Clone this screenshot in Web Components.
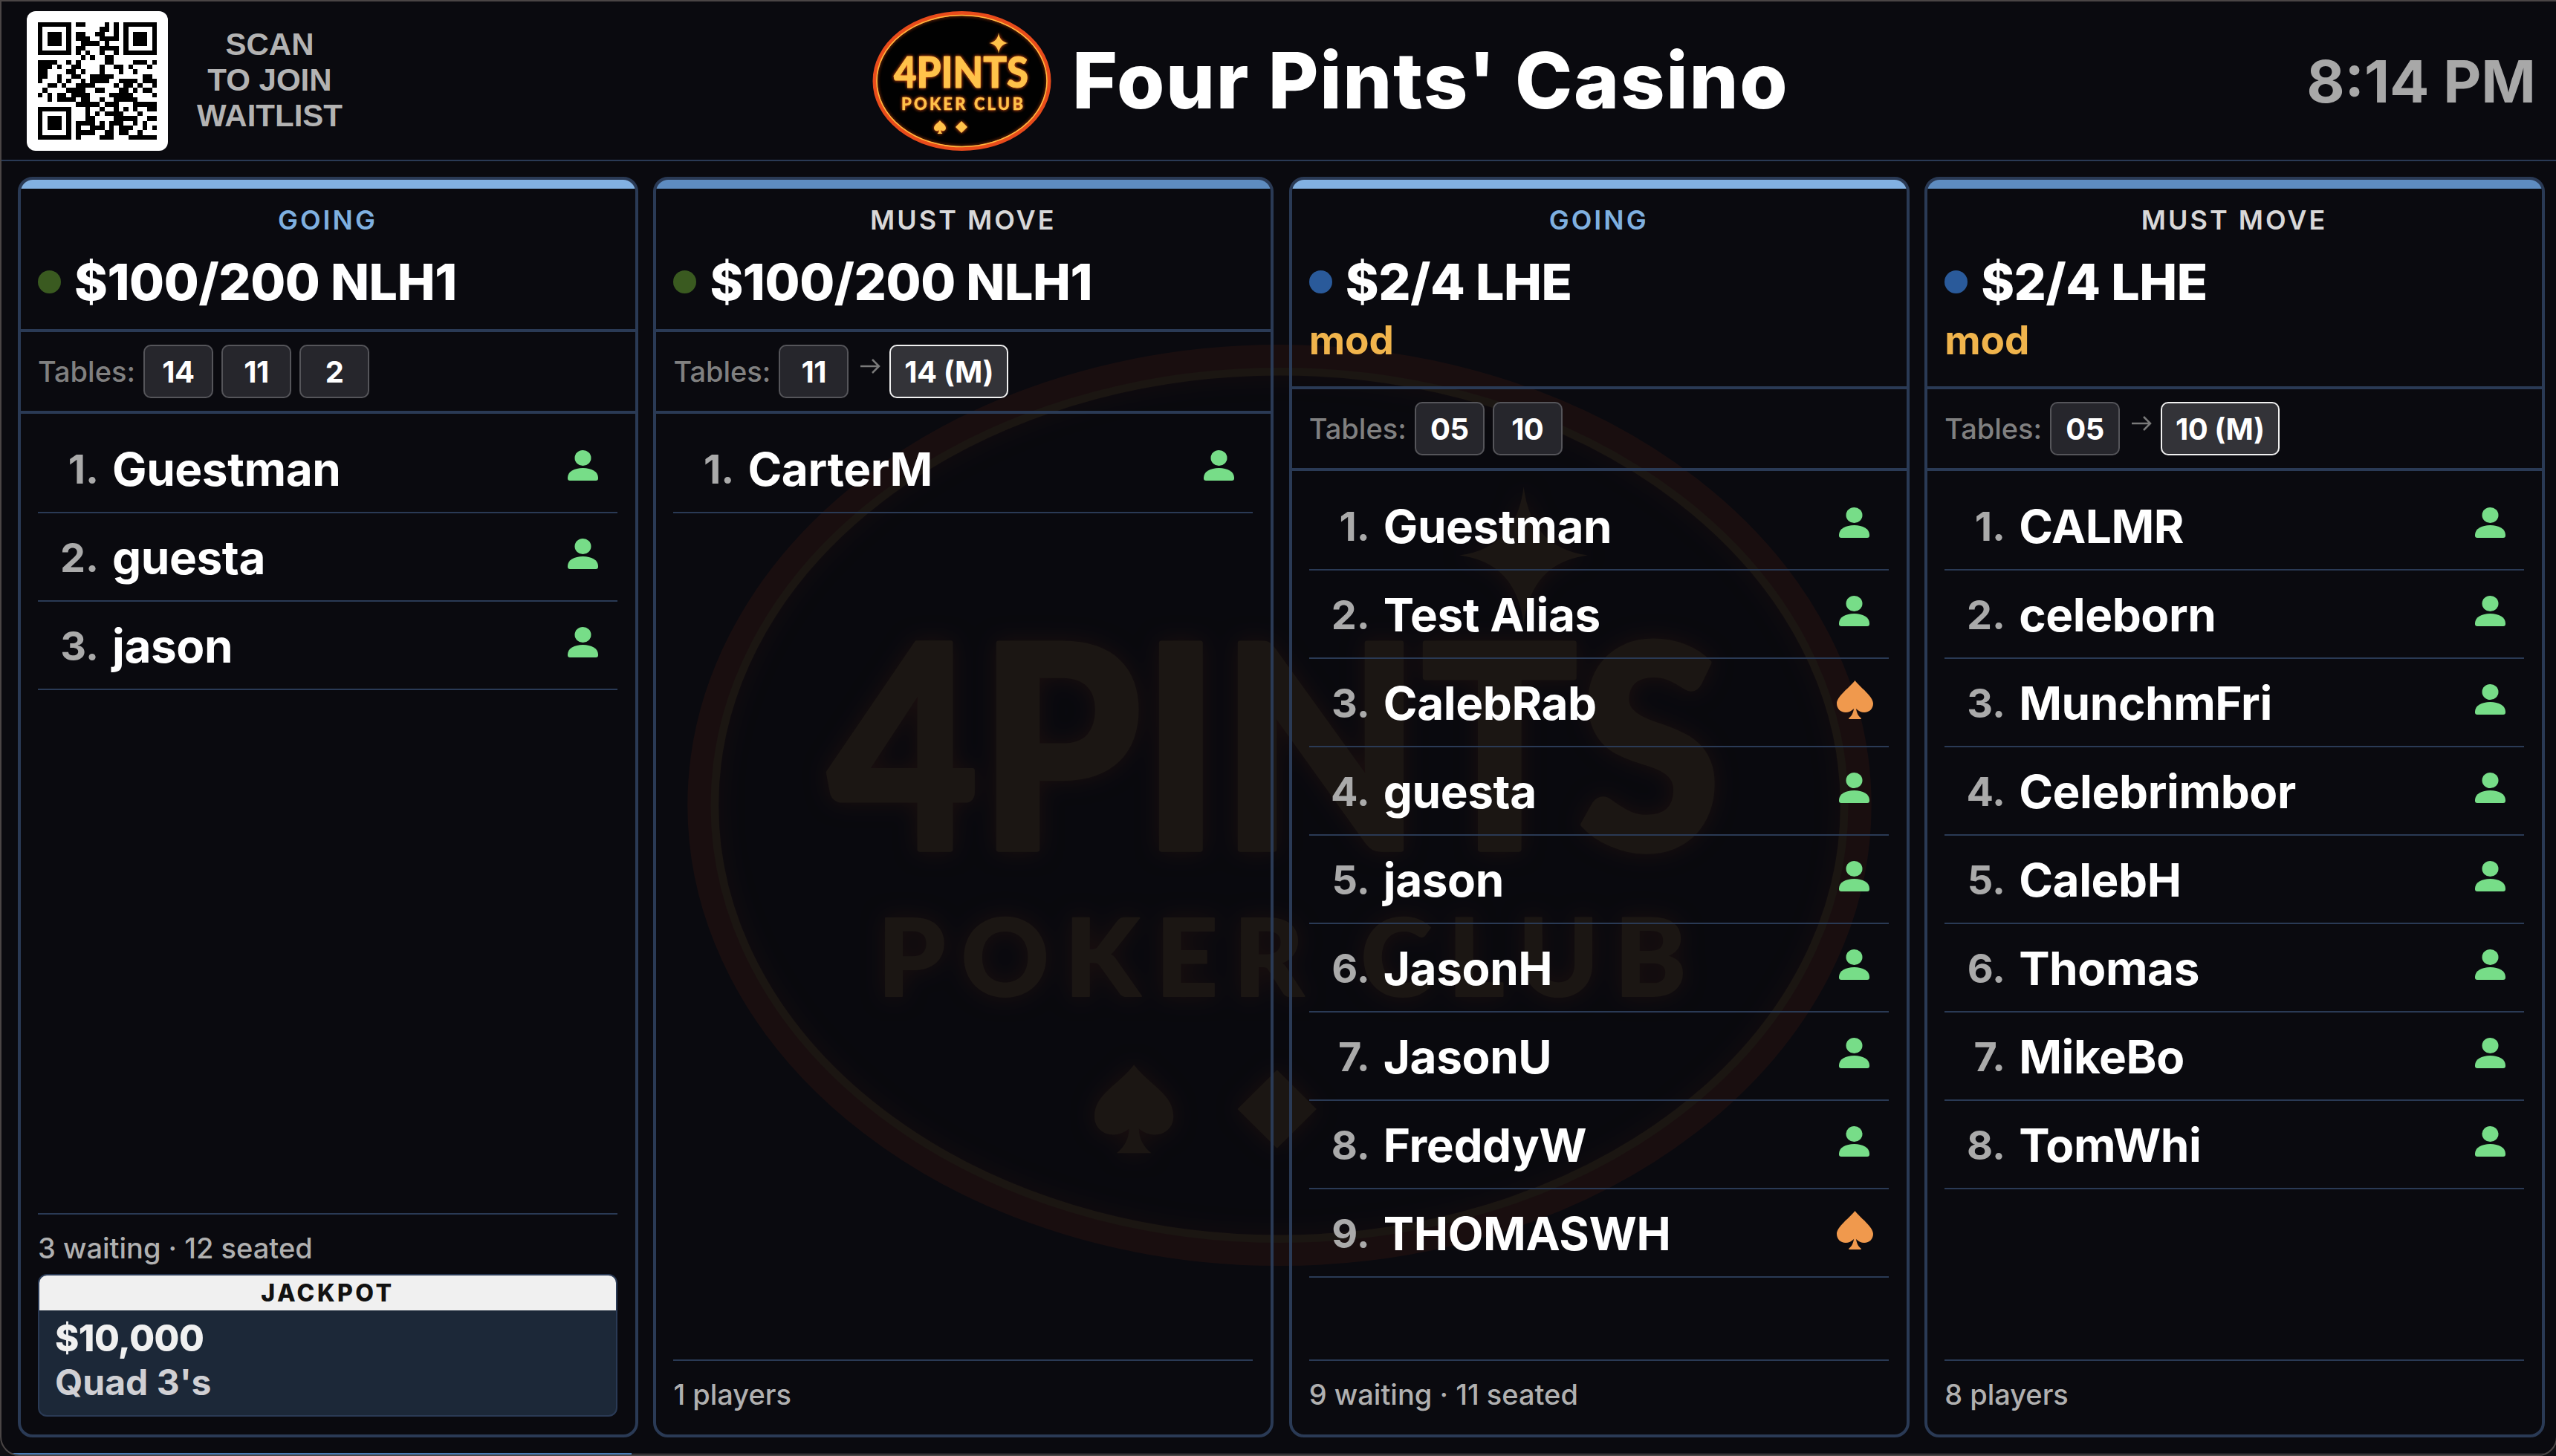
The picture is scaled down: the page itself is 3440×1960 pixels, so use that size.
<!DOCTYPE html>
<html>
<head>
<meta charset="utf-8">
<title>Four Pints' Casino</title>
<style>
  html, body { margin: 0; height: 100%; overflow: hidden; background: #101014; }
  body { font-family: Inter, "Liberation Sans", sans-serif; color: #fff; }
</style>
</head>
<body>
<casino-board>
  <qr-code slot="qr"></qr-code>
  <casino-logo slot="logo"></casino-logo>
  <casino-logo slot="watermark"></casino-logo>

  <game-panel status="GOING" game="$100/200 NLH1" dot="#3a5a20">
    <table-badge slot="tables">14</table-badge>
    <table-badge slot="tables">11</table-badge>
    <table-badge slot="tables">2</table-badge>
    <player-row rank="1">Guestman</player-row>
    <player-row rank="2">guesta</player-row>
    <player-row rank="3">jason</player-row>
    <span slot="stat">3 waiting · 12 seated</span>
    <jackpot-card slot="jackpot" amount="$10,000" hand="Quad 3's"></jackpot-card>
  </game-panel>

  <game-panel status="MUST MOVE" game="$100/200 NLH1" dot="#3a5a20">
    <table-badge slot="tables">11</table-badge>
    <table-badge slot="tables" target>14 (M)</table-badge>
    <player-row rank="1">CarterM</player-row>
    <span slot="stat">1 players</span>
  </game-panel>

  <game-panel status="GOING" game="$2/4 LHE" dot="#2a5a9a" mod="mod">
    <table-badge slot="tables">05</table-badge>
    <table-badge slot="tables">10</table-badge>
    <player-row rank="1">Guestman</player-row>
    <player-row rank="2">Test Alias</player-row>
    <player-row rank="3" icon="spade">CalebRab</player-row>
    <player-row rank="4">guesta</player-row>
    <player-row rank="5">jason</player-row>
    <player-row rank="6">JasonH</player-row>
    <player-row rank="7">JasonU</player-row>
    <player-row rank="8">FreddyW</player-row>
    <player-row rank="9" icon="spade">THOMASWH</player-row>
    <span slot="stat">9 waiting · 11 seated</span>
  </game-panel>

  <game-panel status="MUST MOVE" game="$2/4 LHE" dot="#2a5a9a" mod="mod">
    <table-badge slot="tables">05</table-badge>
    <table-badge slot="tables" target>10 (M)</table-badge>
    <player-row rank="1">CALMR</player-row>
    <player-row rank="2">celeborn</player-row>
    <player-row rank="3">MunchmFri</player-row>
    <player-row rank="4">Celebrimbor</player-row>
    <player-row rank="5">CalebH</player-row>
    <player-row rank="6">Thomas</player-row>
    <player-row rank="7">MikeBo</player-row>
    <player-row rank="8">TomWhi</player-row>
    <span slot="stat">8 players</span>
  </game-panel>
</casino-board>

<script>
const LINE = '#2a3a55';

// page frame, header and the four columns
const boardTemplate = document.createElement('template');
boardTemplate.innerHTML = `
  <style>
  :host {
    display: flex;
    flex-direction: column;
    position: relative;
    box-sizing: border-box;
    width: 3442px;
    height: 1960px;
    background: #0a0a0f;
    border: 2px solid #4a4545;
    border-radius: 0 0 26px 26px;
    overflow: hidden;
  }
  header {
    display: flex;
    justify-content: space-between;
    align-items: center;
    flex: none;
    height: 213px;
    padding: 0 27px 0 34px;
    border-bottom: 2px solid ${LINE};
    position: relative;
  }
  .join { display: flex; align-items: center; gap: 39px; }
  .scan {
    font: bold 42px/48px "Liberation Sans", Arial, sans-serif;
    color: #b3b3b3;
    text-align: center;
    margin-top: -2px;
  }
  .brand { display: flex; align-items: center; gap: 28px; margin-left: 16px; }
  ::slotted(casino-logo[slot="logo"]) { width: 241px; height: 188px; }
  h1 { margin: 0; font-size: 104px; line-height: 1.2; font-weight: 800; letter-spacing: 1.7px; }
  .clock { font-size: 79px; font-weight: 700; color: #a8a8a8; }
  main {
    flex: 1;
    min-height: 0;
    display: grid;
    grid-template-columns: repeat(4, 1fr);
    gap: 20.5px;
    padding: 21px 15px 23px 22px;
    position: relative;
  }
  .mark {
    position: absolute;
    left: 920px;
    top: 462px;
    width: 1600px;
    height: 1240px;
    opacity: .065;
    pointer-events: none;
  }
  ::slotted(casino-logo[slot="watermark"]) { width: 1600px; height: 1240px; }
  .strip {
    position: absolute;
    left: -2px; right: -2px; bottom: -2px;
    height: 4px;
    background: linear-gradient(90deg, #1f4070 0 16px, #4a7db8 16px 850px, #1f1f24 850px);
  }
  </style>
  <div class="mark"><slot name="watermark"></slot></div>
  <header>
    <div class="join">
      <slot name="qr"></slot>
      <div class="scan">SCAN<br>TO JOIN<br>WAITLIST</div>
    </div>
    <div class="brand">
      <slot name="logo"></slot>
      <h1>Four Pints' Casino</h1>
    </div>
    <div class="clock">8:14 PM</div>
  </header>
  <main><slot></slot></main>
  <div class="strip"></div>
`;

class CasinoBoard extends HTMLElement {
  constructor() {
    super();
    this.attachShadow({ mode: 'open' });
    this.shadowRoot.appendChild(boardTemplate.content.cloneNode(true));
  }
}

// white tile with the join code, rows read off the reference
const QR_ROWS = [
  '1111111'+'0'+'110000101'+'0'+'1111111',
  '1000001'+'0'+'000001101'+'0'+'1000001',
  '1011101'+'0'+'110011001'+'0'+'1011101',
  '1011101'+'0'+'111001111'+'0'+'1011101',
  '1011101'+'0'+'011110100'+'0'+'1011101',
  '1000001'+'0'+'110001111'+'0'+'1000001',
  '1111111'+'0'+'101001001'+'0'+'1111111',
  '0000000'+'0'+'010100110'+'0'+'0000000',
  '1111001010000011000011101',
  '1110100110000100110100010',
  '1100001101000100010010000',
  '1100100110011111000000110',
  '1000101001011110011110111',
  '0011010011110000101101' + '001',
  '0100001111001100011010110',
  '1010110111100001111100001',
  '0010111101100100111110000',
  '00000000'+'11111'+'0'+'111000'+'1'+'1111',
  '1111111'+'0'+'00100100'+'1010100'+'11',
  '1000001'+'0'+'0010101'+'11'+'1000'+'1'+'0001',
  '1011101'+'0'+'0011'+'0000'+'11111'+'0'+'011',
  '1011101'+'0'+'1111'+'0101'+'11'+'00'+'1'+'0'+'1'+'00',
  '1011101'+'0'+'1001110'+'10'+'11'+'100'+'101',
  '1000001'+'0'+'111100'+'11'+'0'+'11'+'00'+'1'+'000',
  '1111111'+'0'+'10000111000111111'
];

class QrCode extends HTMLElement {
  constructor() {
    super();
    this.attachShadow({ mode: 'open' });
    let cells = '';
    QR_ROWS.forEach((row, y) => {
      for (let x = 0; x < 25; x++) {
        if (row[x] === '1') cells += `<rect x="${x}" y="${y}" width="1" height="1"/>`;
      }
    });
    this.shadowRoot.innerHTML = `
      <style>
      :host { display: block; width: 190px; height: 188px; }
      div { box-sizing: border-box; height: 100%; padding: 15px; background: #fff; border-radius: 12px; }
      svg { display: block; width: 160px; height: 158px; }
      </style>
      <div><svg viewBox="0 0 25 25" preserveAspectRatio="none" shape-rendering="crispEdges" fill="#000">${cells}</svg></div>
    `;
  }
}

// neon oval logo, also used huge and faint behind the columns
const logoTemplate = document.createElement('template');
logoTemplate.innerHTML = `
  <style>
  :host { display: block; }
  svg { display: block; width: 100%; height: 100%; overflow: visible; }
  text { font-family: Lato, "Open Sans", sans-serif; fill: #ffc24a; stroke: #ffc24a; stroke-linejoin: round; }
  </style>
  <svg viewBox="0 0 241 188" preserveAspectRatio="none">
    <defs>
      <filter id="glow" x="-20%" y="-20%" width="140%" height="140%" color-interpolation-filters="sRGB">
        <feGaussianBlur in="SourceAlpha" stdDeviation="2.200" result="b"/>
        <feFlood flood-color="#ff5a14" result="c"/>
        <feComposite in="c" in2="b" operator="in" result="g"/>
        <feMerge><feMergeNode in="g"/><feMergeNode in="SourceGraphic"/></feMerge>
      </filter>
    </defs>
    <ellipse cx="120.500" cy="94" rx="117" ry="91" fill="#010101" stroke="#e64a1c" stroke-width="6"/>
    <g filter="url(#glow)">
      <ellipse cx="120.500" cy="94" rx="114.500" ry="88.500" fill="none" stroke="#ffb93f" stroke-width="1.600"/>
      <text x="29" y="103" font-size="58" font-weight="900" stroke-width="1" textLength="181" lengthAdjust="spacingAndGlyphs">4PINTS</text>
      <text x="39" y="133" font-size="22" font-weight="900" stroke-width=".3" textLength="164" lengthAdjust="spacing">POKER CLUB</text>
      <path fill="#ffc24a" d="M170 29 Q171.500 41.500 183 43 Q171.500 44.500 170 57 Q168.500 44.500 157 43 Q168.500 41.500 170 29Z"/>
      <path fill="#ffc24a" d="M91 147 C88 151 83 153 83 157.500 C83 161 87 162.500 90 160 Q90 163 87.500 165 H94.500 Q92 163 92 160 C95 162.500 99 161 99 157.500 C99 153 94 151 91 147Z"/>
      <path fill="#ffc24a" d="M120 148 L128 156 L120 164 L112 156Z"/>
    </g>
  </svg>
`;

class CasinoLogo extends HTMLElement {
  constructor() {
    super();
    this.attachShadow({ mode: 'open' });
    this.shadowRoot.appendChild(logoTemplate.content.cloneNode(true));
  }
}

// one waitlist column
const panelTemplate = document.createElement('template');
panelTemplate.innerHTML = `
  <style>
  :host {
    display: flex;
    flex-direction: column;
    min-width: 0;
    box-sizing: border-box;
    border: 4px solid ${LINE};
    border-radius: 20px;
    overflow: hidden;
    position: relative;
  }
  .bar { flex: none; height: 12px; background: var(--tone); }
  .top { padding: 20px 24px 21px 23px; border-bottom: 4px solid ${LINE}; }
  .status {
    text-align: center;
    font-size: 36px;
    line-height: 44px;
    font-weight: 600;
    letter-spacing: 3px;
    color: var(--label);
  }
  .game { display: flex; align-items: center; gap: 18px; margin-top: 18px; height: 86px; }
  .dot { width: 31px; height: 31px; border-radius: 50%; background: var(--dot); flex: none; }
  h2 { margin: 0; font-size: 68px; font-weight: 800; letter-spacing: -.4px; }
  .mod { font-size: 53px; line-height: 72px; margin-bottom: 5px; font-weight: 700; color: #f0b44c; }
  .mod:empty { display: none; }
  .tables {
    display: flex;
    align-items: center;
    gap: 11px;
    padding: 17px 24px 17px 23px;
    border-bottom: 4px solid ${LINE};
  }
  .tables span { font-size: 38px; font-weight: 500; color: #808080; }
  .list { flex: 1; min-height: 0; padding: 15px 24px 0 23px; }
  .foot { margin: 0 24px 0 23px; padding: 22px 0 24px; border-top: 2px solid ${LINE}; }
  .stat { display: block; font-size: 38px; font-weight: 500; line-height: 46px; color: #b0b0b0; margin-bottom: 7px; }
  ::slotted(jackpot-card) { margin-top: 12px; }
  </style>
  <div class="bar"></div>
  <div class="top">
    <div class="status"></div>
    <div class="game"><i class="dot"></i><h2></h2></div>
    <div class="mod"></div>
  </div>
  <div class="tables"><span>Tables:</span><slot name="tables"></slot></div>
  <div class="list"><slot></slot></div>
  <div class="foot">
    <div class="stat"><slot name="stat"></slot></div>
    <slot name="jackpot"></slot>
  </div>
`;

class GamePanel extends HTMLElement {
  constructor() {
    super();
    this.attachShadow({ mode: 'open' });
    this.shadowRoot.appendChild(panelTemplate.content.cloneNode(true));
    const going = this.getAttribute('status') === 'GOING';
    this.style.setProperty('--tone', going ? '#82b1e2' : '#5e8cc0');
    this.style.setProperty('--label', going ? '#7fb0e0' : '#d8d8d8');
    this.style.setProperty('--dot', this.getAttribute('dot'));
    this.shadowRoot.querySelector('.status').textContent = this.getAttribute('status');
    this.shadowRoot.querySelector('h2').textContent = this.getAttribute('game');
    this.shadowRoot.querySelector('.mod').textContent = this.getAttribute('mod') || '';
  }
}

// table number chip, "target" adds the arrow and the white outline
class TableBadge extends HTMLElement {
  constructor() {
    super();
    this.attachShadow({ mode: 'open' });
    const target = this.hasAttribute('target');
    this.shadowRoot.innerHTML = `
      <style>
      :host { display: flex; align-items: center; flex: none; }
      .chip {
        box-sizing: border-box;
        min-width: 94px;
        height: 72px;
        padding: 0 18px;
        display: flex;
        align-items: center;
        justify-content: center;
        border-radius: 10px;
        border: 2px solid ${target ? '#f0f0f0' : '#55555a'};
        background: ${target ? '#333338' : '#26262c'};
        font-size: 40px;
        font-weight: 700;
        letter-spacing: -.5px;
      }
      svg { margin: -14px 12px 0 4px; display: block; }
      </style>
      ${target ? `<svg width="28" height="22" viewBox="0 0 28 22" fill="none" stroke="#7a7a7a" stroke-width="2.500"><path d="M1 11H26M17 2L26 11L17 20"/></svg>` : ''}
      <div class="chip"><slot></slot></div>
    `;
  }
}

const ICONS = {
  person: `<svg style="margin-right:2px" width="41" height="41" viewBox="0 0 41 41" fill="#77dd88"><ellipse cx="20.500" cy="10.500" rx="11" ry="10.500"/><path d="M0 37C0 29 9 24 20.500 24S41 29 41 37V38Q41 41 38 41H3Q0 41 0 38Z"/></svg>`,
  spade: `<svg width="49" height="52" viewBox="0 0 49 52" fill="#f0994d"><path d="M24.500 0C18 9 0 21 0 31C0 38 5 43 12 43C16 43 20 41 23 38C22 44 20 48 16 51Q16 52 17 52H32Q33 52 33 51C29 48 27 44 26 38C29 41 33 43 37 43C44 43 49 38 49 31C49 21 31 9 24.500 0Z"/></svg>`
};

class PlayerRow extends HTMLElement {
  constructor() {
    super();
    this.attachShadow({ mode: 'open' });
    const icon = ICONS[this.getAttribute('icon') || 'person'];
    this.shadowRoot.innerHTML = `
      <style>
      :host {
        display: flex;
        align-items: center;
        box-sizing: border-box;
        height: 119px;
        border-bottom: 2px solid ${LINE};
      }
      .rank { width: 82px; flex: none; margin-top: 2px; text-align: right; font-size: 54px; font-weight: 700; color: #aaaaaa; }
      .name { flex: 1; min-width: 0; margin: 2px 0 0 18px; font-size: 62px; font-weight: 700; letter-spacing: -.4px; white-space: nowrap; }
      .icon { width: 50px; flex: none; display: flex; justify-content: center; margin: -8px 20px 0 0; }
      svg { display: block; }
      </style>
      <div class="rank">${this.getAttribute('rank')}.</div>
      <div class="name"><slot></slot></div>
      <div class="icon">${icon}</div>
    `;
  }
}

class JackpotCard extends HTMLElement {
  constructor() {
    super();
    this.attachShadow({ mode: 'open' });
    this.shadowRoot.innerHTML = `
      <style>
      :host {
        display: block;
        box-sizing: border-box;
        height: 192px;
        border: 2px solid ${LINE};
        border-radius: 12px;
        overflow: hidden;
        background: #1c2838;
      }
      .head {
        height: 47px;
        line-height: 47px;
        background: #f0f0f0;
        color: #111;
        text-align: center;
        font-size: 32px;
        font-weight: 800;
        letter-spacing: 3.500px;
      }
      .body { padding: 8px 21px; font-size: 48px; line-height: 59px; }
      .amount { font-weight: 800; font-size: 49px; letter-spacing: -.5px; color: #f0f0f0; }
      .hand { font-weight: 700; color: #d0d0d4; }
      </style>
      <div class="head">JACKPOT</div>
      <div class="body">
        <div class="amount">${this.getAttribute('amount')}</div>
        <div class="hand">${this.getAttribute('hand')}</div>
      </div>
    `;
  }
}

customElements.define('casino-board', CasinoBoard);
customElements.define('qr-code', QrCode);
customElements.define('casino-logo', CasinoLogo);
customElements.define('game-panel', GamePanel);
customElements.define('table-badge', TableBadge);
customElements.define('player-row', PlayerRow);
customElements.define('jackpot-card', JackpotCard);
</script>
</body>
</html>
